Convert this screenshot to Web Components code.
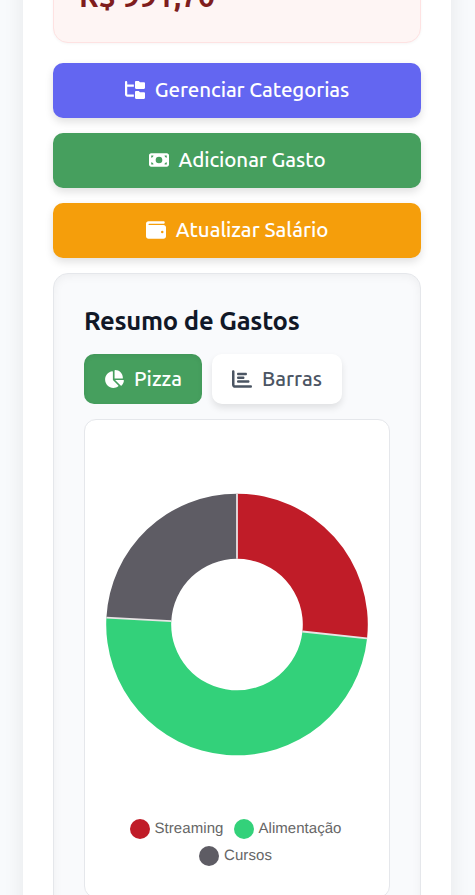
<!DOCTYPE html>
<html lang="pt-BR">
<head>
<meta charset="utf-8">
<title>Controle de Gastos</title>
<style>
html,body{margin:0;height:100%;overflow:hidden}
body{background:#f8fafc;font-family:Ubuntu,"Noto Sans","Open Sans",sans-serif;color:#111827}
</style>
</head>
<body>
<finance-page>
  <balance-card><fit-text width="136">R$ 991,70</fit-text></balance-card>
  <action-button icon="folder" style="--bg:#6366f1"><fit-text width="194.5">Gerenciar Categorias</fit-text></action-button>
  <action-button icon="money" style="--bg:#469f5e"><fit-text width="147">Adicionar Gasto</fit-text></action-button>
  <action-button icon="wallet" style="--bg:#f59e0b"><fit-text width="152.5">Atualizar Salário</fit-text></action-button>
  <summary-card>
    <fit-text slot="title" width="215.5">Resumo de Gastos</fit-text>
    <view-tab slot="tabs" icon="pie" active><fit-text width="48">Pizza</fit-text></view-tab>
    <view-tab slot="tabs" icon="bars"><fit-text width="60">Barras</fit-text></view-tab>
    <donut-chart></donut-chart>
  </summary-card>
</finance-page>
<script>
const icons = {
  folder: ['0 0 576 512', 'M64 32C64 14.3 49.7 0 32 0S0 14.3 0 32v96V384c0 35.3 28.7 64 64 64H256V384H64V160H256V96H64V32zM288 192c0 17.7 14.3 32 32 32H544c17.7 0 32-14.3 32-32V64c0-17.7-14.3-32-32-32H445.3c-8.5 0-16.6-3.4-22.6-9.4L409.4 9.4c-6-6-14.1-9.4-22.6-9.4H320c-17.7 0-32 14.3-32 32V192zm0 288c0 17.7 14.3 32 32 32H544c17.7 0 32-14.3 32-32V352c0-17.7-14.3-32-32-32H445.3c-8.5 0-16.6-3.4-22.6-9.4l-13.3-13.3c-6-6-14.1-9.4-22.6-9.4H320c-17.7 0-32 14.3-32 32V480z'],
  money: ['0 0 576 512', 'M64 64C28.7 64 0 92.7 0 128V384c0 35.3 28.7 64 64 64H512c35.3 0 64-28.7 64-64V128c0-35.3-28.7-64-64-64H64zm64 320H64V320c35.3 0 64 28.7 64 64zM64 192V128h64c0 35.3-28.7 64-64 64zM448 384c0-35.3 28.7-64 64-64v64H448zm64-192c-35.3 0-64-28.7-64-64h64v64zM288 160a96 96 0 1 1 0 192 96 96 0 1 1 0-192z'],
  wallet: ['0 0 512 512', 'M64 32C28.7 32 0 60.7 0 96V416c0 35.3 28.7 64 64 64H448c35.3 0 64-28.7 64-64V192c0-35.3-28.7-64-64-64H80c-8.8 0-16-7.2-16-16s7.2-16 16-16H448c17.7 0 32-14.3 32-32s-14.3-32-32-32H64zM416 272a32 32 0 1 1 0 64 32 32 0 1 1 0-64z'],
  pie: ['0 0 576 512', 'M304 240V16.6c0-9 7-16.6 16-16.6C443.7 0 544 100.3 544 224c0 9-7.6 16-16.6 16H304zM32 272C32 150.7 122.1 50.3 239 34.3c9.2-1.3 17 6.1 17 15.4V288L412.5 444.5c6.7 6.7 6.2 17.7-1.5 23.1C371.8 495.6 323.8 512 272 512C139.5 512 32 404.6 32 272zm526.4 16c9.3 0 16.6 7.8 15.4 17c-7.7 55.9-34.6 105.6-73.9 142.3c-6 5.6-15.4 5.2-21.2-.7L320 288H558.4z'],
  bars: ['0 0 512 512', 'M32 32c17.7 0 32 14.3 32 32V400c0 8.8 7.2 16 16 16H480c17.7 0 32 14.3 32 32s-14.3 32-32 32H80c-44.2 0-80-35.8-80-80V64C0 46.3 14.3 32 32 32zm96 96c0-17.7 14.3-32 32-32l192 0c17.7 0 32 14.3 32 32s-14.3 32-32 32l-192 0c-17.7 0-32-14.3-32-32zm32 64H288c17.7 0 32 14.3 32 32s-14.3 32-32 32H160c-17.7 0-32-14.3-32-32s14.3-32 32-32zm0 96H416c17.7 0 32 14.3 32 32s-14.3 32-32 32H160c-17.7 0-32-14.3-32-32s14.3-32 32-32z']
};
const icon = n => `<svg width="20" height="20" viewBox="${icons[n][0]}" fill="currentColor" aria-hidden="true"><path d="${icons[n][1]}"/></svg>`;
function define(name, render) {
  customElements.define(name, class extends HTMLElement {
    connectedCallback() {
      if (!this.shadowRoot) this.attachShadow({mode: 'open'}).innerHTML = render(this);
    }
  });
}

define('finance-page', () => `
<style>
:host{display:block;box-sizing:border-box;height:895px;padding:0 24px 0 23px;overflow:hidden}
main{display:flex;flex-direction:column;box-sizing:border-box;height:1000px;margin-top:-60px;padding:0 30px;background:#fff;box-shadow:0 0 20px rgba(0,0,0,.08)}
</style><main><slot></slot></main>`);

define('balance-card', () => `
<style>
:host{display:flex;align-items:flex-end;flex:none;box-sizing:border-box;height:103px;margin-bottom:20px;padding:0 25px 26px;border:1px solid #fee2e2;border-radius:15px;background:#fef5f4;box-shadow:0 1px 3px rgba(0,0,0,.04);color:#7f1d1d;font-size:30px;font-weight:700;line-height:40px}
</style><slot></slot>`);

define('action-button', el => `
<style>
:host{display:flex;flex:none;height:55px;margin-bottom:15px}
button{display:flex;align-items:center;justify-content:center;gap:10px;width:100%;padding:0 0 2px;border:0;border-radius:10px;background:var(--bg);box-shadow:0 4px 8px rgba(0,0,0,.12);color:#fff;font:500 20.5px/28px Ubuntu,"Noto Sans",sans-serif}
svg{flex:none}
</style><button>${icon(el.getAttribute('icon'))}<slot></slot></button>`);

define('summary-card', () => `
<style>
:host{display:block;flex:none;box-sizing:border-box;height:700px;padding:30px;border:1px solid #e5e7eb;border-radius:15px;background:#f9fafc;box-shadow:inset 0 2px 10px rgba(0,0,0,.05)}
h2{margin:0 0 15px;height:35px;font-size:25.6px;font-weight:600;line-height:33px}
.tabs{display:flex;gap:10px;height:50px;margin-bottom:15px}
</style><h2><slot name="title"></slot></h2><div class="tabs"><slot name="tabs"></slot></div><slot></slot>`);

define('view-tab', el => `
<style>
:host{display:flex}
button{display:flex;align-items:center;gap:10px;padding:0 20px;border:0;border-radius:10px;background:#fff;color:#4b5563;box-shadow:0 4px 7px rgba(0,0,0,.1);font:500 20.5px/28px Ubuntu,"Noto Sans",sans-serif}
:host([active]) button{background:#469f5e;color:#fff;box-shadow:inset 0 2px 5px rgba(0,0,0,.06)}
svg{flex:none}
</style><button>${icon(el.getAttribute('icon'))}<slot></slot></button>`);

const polar = (r, deg) => {
  const a = deg * Math.PI / 180;
  return `${(131 + r * Math.sin(a)).toFixed(2)} ${(131.5 - r * Math.cos(a)).toFixed(2)}`;
};
const slice = (a, b, color) => {
  const big = b - a > 180 ? 1 : 0;
  return `<path fill="${color}" d="M${polar(130.8, a)}A130.8 130.8 0 ${big} 1 ${polar(130.8, b)}L${polar(65.8, b)}A65.8 65.8 0 ${big} 0 ${polar(65.8, a)}Z"/>`;
};
const divider = a => `<path stroke="#e8e4e5" stroke-width="1.8" d="M${polar(65.8, a)}L${polar(130.8, a)}"/>`;
define('donut-chart', () => `
<style>
:host{display:flex;flex-direction:column;align-items:center;box-sizing:border-box;height:479px;padding-top:73px;border:1px solid #e5e7eb;border-radius:12px;background:#fff}
svg{display:block;flex:none;overflow:visible}
.legend{display:flex;flex-direction:column;align-items:center;gap:7px;margin:64px 3px 0 0}
.row{display:flex;gap:10px}
</style>
<svg width="262" height="262" viewBox="0 0 262 262">${slice(0, 96.1, '#c01c28')}${slice(96.1, 273, '#33d17a')}${slice(273, 360, '#5e5c64')}${divider(0)}${divider(96.1)}${divider(273)}</svg>
<div class="legend"><div class="row"><legend-item style="--dot:#c01c28"><fit-text width="69">Streaming</fit-text></legend-item><legend-item style="--dot:#33d17a"><fit-text width="83">Alimentação</fit-text></legend-item></div>
<div class="row"><legend-item style="--dot:#5e5c64"><fit-text width="48">Cursos</fit-text></legend-item></div></div>`);

define('legend-item', () => `
<style>
:host{display:flex;align-items:center;gap:5px;height:20px;color:#666;font:15px/18px "Liberation Sans",Arial,sans-serif;text-rendering:geometricPrecision}
i{width:20px;height:20px;border-radius:50%;background:var(--dot)}
slot{display:block}
</style><i></i><slot></slot>`);

/* Spreads its letters evenly over the given advance width. */
customElements.define('fit-text', class extends HTMLElement {
  connectedCallback() {
    if (this.shadowRoot) return;
    this.attachShadow({mode: 'open'}).innerHTML = '<style>:host{display:inline-block;white-space:nowrap}span{display:inline-block}</style><span><slot></slot></span>';
    const span = this.shadowRoot.querySelector('span');
    const target = Number(this.getAttribute('width'));
    const extra = target - span.getBoundingClientRect().width;
    span.style.letterSpacing = (extra / this.textContent.length).toFixed(3) + 'px';
    this.style.width = target + 'px';
  }
});
</script>
</body>
</html>
